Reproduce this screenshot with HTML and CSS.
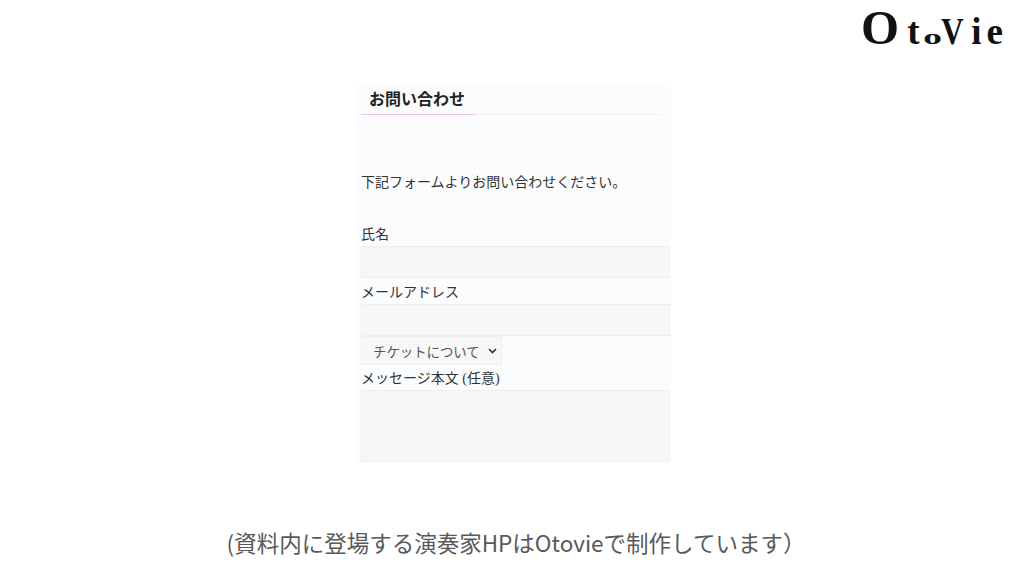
FILE: index.html
```html
<!DOCTYPE html>
<html lang="ja">
<head>
<meta charset="utf-8">
<title>Otovie</title>
<link rel="stylesheet" href="styles.css">
</head>
<body>
<div class="slide">
  <header class="top">
    <div class="logo"><span class="l-o">O</span><span class="l-t">t</span><span class="l-s">o</span><span class="l-v">V</span><span class="l-i">i</span><span class="l-e">e</span></div>
  </header>
  <main class="panel">
    <h2 class="title">お問い合わせ</h2>
    <p class="lead">下記フォームよりお問い合わせください。</p>
    <label class="label first">氏名</label>
    <div class="field"></div>
    <label class="label">メールアドレス</label>
    <div class="field"></div>
    <div class="select"><span>チケットについて</span>
      <svg class="chev" width="9" height="6" viewBox="0 0 9 6"><path d="M1 1l3.5 3.5L8 1" fill="none" stroke="#333" stroke-width="1.6"/></svg>
    </div>
    <label class="label msg">メッセージ本文 (任意)</label>
    <div class="area"></div>
  </main>
  <footer class="caption">(資料内に登場する演奏家HPはOtovieで制作しています）</footer>
</div>
</body>
</html>
```
FILE: styles.css
```css
* { box-sizing: border-box; }
html, body { margin: 0; padding: 0; background: #fff; }
.slide {
  width: 1024px; height: 576px; overflow: hidden;
  display: flex; flex-direction: column; align-items: center;
  font-family: "Liberation Serif", "Noto Sans CJK JP", serif;
}
.top { width: 100%; height: 82px; display: flex; justify-content: flex-end; padding: 3px 21px 0 0; }
.logo {
  height: 50px; display: flex; align-items: baseline;
  font-weight: 700; font-size: 37px; line-height: 50px; color: #111;
}
.logo span { display: block; }
.l-o { font-size: 49px; margin-right: -1px; }
.l-t { margin-left: 9px; }
.l-s { font-size: 22px; margin-left: 7.5px; transform: scaleX(1.7); }
.l-v { margin-left: .5px; transform: scaleX(.85); }
.l-i { margin-left: 6px; }
.l-e { margin-left: 5px; }
.panel {
  width: 317px; height: 381px; background: #fbfcfe; overflow: hidden;
  padding: 0 0 0 7px; margin-left: 1px; color: #333;
}
.title {
  width: 300px; height: 33px; margin: 0; padding: 8px 0 0 8px;
  font-size: 16px; line-height: 20px; font-weight: 700; color: #222;
  border-bottom: 1px solid #f1f1f5; position: relative;
}
.title::after {
  content: ""; position: absolute; left: 0; bottom: -1px; width: 114px; height: 1px; background: #f2c4ea;
}
.lead { margin: 58px 0 0; font-size: 14px; line-height: 20px; }
.label { display: block; font-size: 14px; line-height: 20px; height: 20px; }
.label.first { margin-top: 32px; }
.field {
  width: 310px; height: 32px; background: #f7f7f7;
  border: 1px solid #eeeeee; border-right: 0; border-radius: 2px 0 0 2px;
}
.label + .field { margin-top: 1px; }
.field + .label { margin-top: 5px; }
.select {
  width: 141px; height: 29px; background: #f7f7f7; border: 1px solid #eeeeee;
  display: flex; align-items: center; justify-content: space-between;
  padding: 0 4px 0 11px; font-size: 13.4px; color: #555;
}
.label.msg { margin-top: 4px; }
.area {
  width: 310px; height: 90px; margin-top: 1px; background: #f7f7f7;
  border: 1px solid #eeeeee; border-right: 0;
}
.caption {
  margin-top: 64px; margin-left: 8px; font-family: "Noto Sans CJK JP", "Noto Sans", sans-serif;
  font-size: 22.5px; line-height: 30px; color: #595959; white-space: nowrap;
}
```
